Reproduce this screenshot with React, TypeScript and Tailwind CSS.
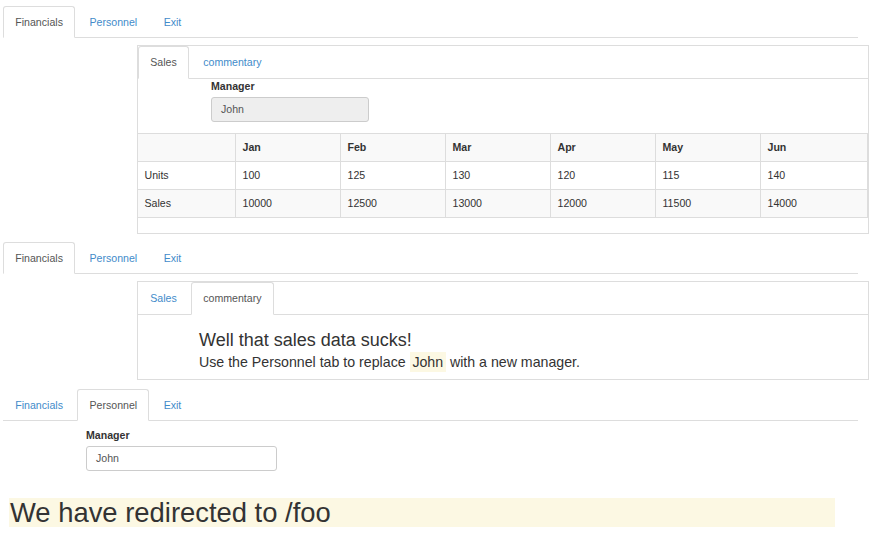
import React from "react";

type Tab = { label: string; active?: boolean };

const months = ["Jan", "Feb", "Mar", "Apr", "May", "Jun"];
const rows = [
  { name: "Units", values: [100, 125, 130, 120, 115, 140] },
  { name: "Sales", values: [10000, 12500, 13000, 12000, 11500, 14000] },
];

const TabBar = ({ tabs, tall }: { tabs: Tab[]; tall?: boolean }) => (
  <div className="flex border-b border-[#ddd]">
    {tabs.map((t) => (
      <a
        key={t.label}
        href="#"
        className={`-mb-px mr-[2px] px-[11.25px] border rounded-t-[3px] flex items-center ${
          tall ? "h-[33px]" : "h-[32px]"
        } ${
          t.active
            ? "bg-white border-[#ddd] border-b-transparent text-[#555]"
            : "border-transparent text-[#428bca]"
        }`}
      >
        {t.label}
      </a>
    ))}
  </div>
);

const Cell = ({ children, head }: { children: React.ReactNode; head?: boolean }) =>
  head ? (
    <th className="border border-[#ddd] h-[28px] px-[6.5px] text-left font-bold">{children}</th>
  ) : (
    <td className="border border-[#ddd] h-[28px] px-[6.5px]">{children}</td>
  );

export default function App() {
  return (
    <div className="font-['Liberation_Sans',Arial,sans-serif] text-[10.6px] leading-[15px] text-[#333] bg-white w-[879px] h-[543px] overflow-hidden">
      {/* first state: Financials / Sales */}
      <div className="ml-[3px] mt-[6px] w-[855px]">
        <TabBar tabs={[{ label: "Financials", active: true }, { label: "Personnel" }, { label: "Exit" }]} />
      </div>
      <div className="ml-[137px] mt-[7px] w-[732px] border border-[#ddd]">
        <TabBar tall tabs={[{ label: "Sales", active: true }, { label: "commentary" }]} />
        <div className="ml-[73px]">
          <label className="block font-bold">Manager</label>
          <div className="mt-[3px] w-[158px] h-[25px] border border-[#ccc] rounded-[3px] bg-[#eee] px-[9px] flex items-center text-[#555]">
            John
          </div>
        </div>
        <table className="mt-[11px] mb-[15px] -ml-px w-[730px] table-fixed border-collapse">
          <colgroup>
            <col className="w-[98px]" />
            <col className="w-[105px]" />
            <col className="w-[105px]" />
            <col className="w-[105px]" />
            <col className="w-[105px]" />
            <col className="w-[105px]" />
            <col className="w-[107px]" />
          </colgroup>
          <tbody>
            <tr className="bg-[#f9f9f9]">
              <Cell head>{""}</Cell>
              {months.map((m) => (
                <Cell head key={m}>{m}</Cell>
              ))}
            </tr>
            {rows.map((r, i) => (
              <tr key={r.name} className={i % 2 === 1 ? "bg-[#f9f9f9]" : "bg-white"}>
                <Cell>{r.name}</Cell>
                {r.values.map((v, j) => (
                  <Cell key={j}>{v}</Cell>
                ))}
              </tr>
            ))}
          </tbody>
        </table>
      </div>

      {/* second state: Financials / commentary */}
      <div className="ml-[3px] mt-[8px] w-[855px]">
        <TabBar tabs={[{ label: "Financials", active: true }, { label: "Personnel" }, { label: "Exit" }]} />
      </div>
      <div className="ml-[137px] mt-[7px] w-[732px] border border-[#ddd] pb-[7px]">
        <TabBar tall tabs={[{ label: "Sales" }, { label: "commentary", active: true }]} />
        <div className="ml-[61px]">
          <h3 className="mt-[15px] text-[18px] leading-[20px]">Well that sales data sucks!</h3>
          <p className="mt-[2px] text-[14.2px] leading-[20px]">
            Use the Personnel tab to replace <mark className="bg-[#fcf8e3] text-[#333] px-[2.8px] py-[2px]">John</mark> with a new
            manager.
          </p>
        </div>
      </div>

      {/* third state: Personnel */}
      <div className="ml-[3px] mt-[9px] w-[855px]">
        <TabBar tabs={[{ label: "Financials" }, { label: "Personnel", active: true }, { label: "Exit" }]} />
      </div>
      <div className="ml-[86px] mt-[7px]">
        <label className="block font-bold">Manager</label>
        <div className="mt-[3px] w-[191px] h-[25px] border border-[#ccc] rounded-[3px] bg-white px-[9px] flex items-center text-[#555]">
          John
        </div>
      </div>

      <h1 className="ml-[9px] mt-[27px] w-[826px] h-[29px] pl-[1px] bg-[#fcf8e3] text-[27.4px] leading-[29px]">
        We have redirected to /foo
      </h1>
    </div>
  );
}
